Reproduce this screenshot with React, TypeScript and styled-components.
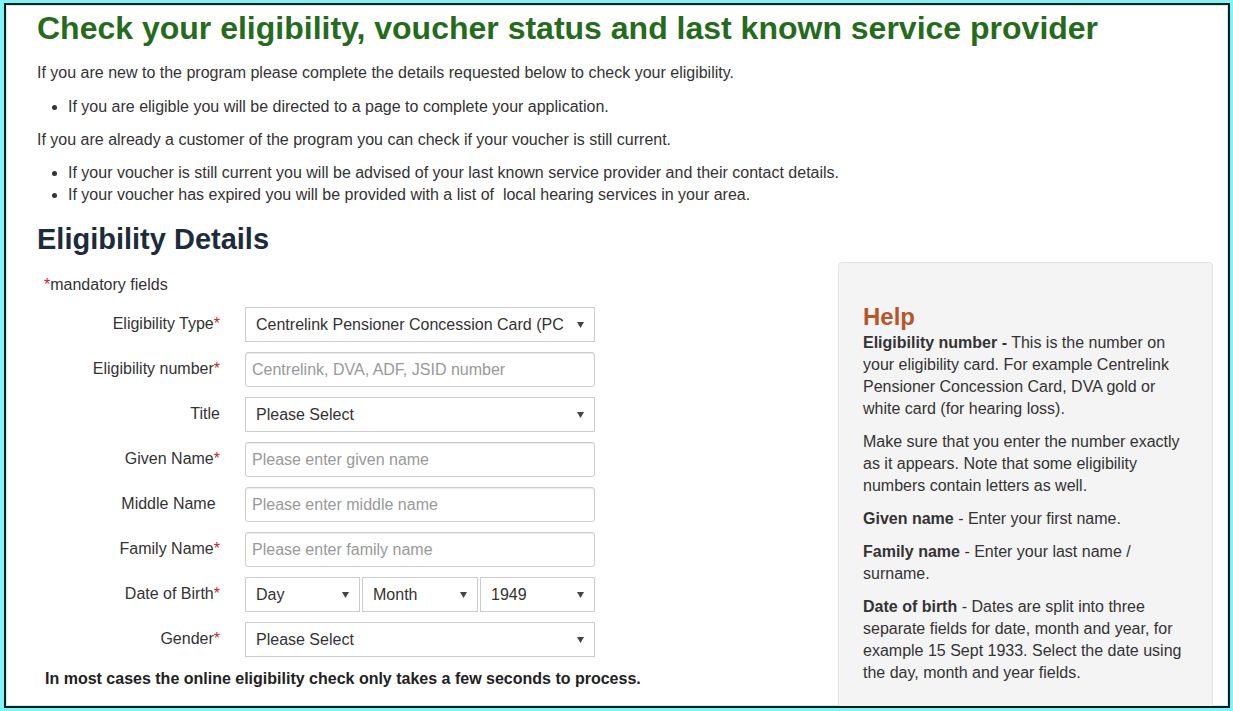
import React from "react"
import styled, { createGlobalStyle } from "styled-components"

const GlobalStyle = createGlobalStyle`
  html, body {
    margin: 0;
    padding: 0;
    background: #80f4f4;
  }
  body {
    font-family: "Liberation Sans", Arial, sans-serif;
    color: #333;
  }
  * { box-sizing: border-box; }
`

const Frame = styled.div`
  margin: 3px 3px 0 4px;
  height: 705px;
  border: 2px solid #0d1b1b;
  background: #fff;
  box-shadow: inset 0 0 0 1px #bff5f5;
  overflow: hidden;
  padding: 0 15px 0 31px;
`

const Title = styled.h1`
  margin: 5px 0 0;
  font-size: 32px;
  line-height: 36px;
  font-weight: bold;
  color: #256b1c;
  white-space: nowrap;
`

const Para = styled.p<{ $top?: number }>`
  margin: ${(p) => p.$top ?? 10}px 0 0;
  font-size: 16px;
  line-height: 22px;
`

const List = styled.ul<{ $top?: number }>`
  margin: ${(p) => p.$top ?? 11}px 0 0;
  padding-left: 31px;
  font-size: 16px;
  line-height: 22px;
`

const SectionTitle = styled.h2`
  margin: 16px 0 0;
  font-size: 29px;
  line-height: 34px;
  font-weight: bold;
  color: #1d2c3c;
`

const Columns = styled.div`
  display: flex;
  justify-content: space-between;
  margin-top: 6px;
`

const FormColumn = styled.div`
  width: 640px;
  padding-top: 13px;
`

const Mandatory = styled.div`
  padding-left: 7px;
  font-size: 16px;
  line-height: 20px;
`

const Star = styled.span`
  color: #c0262b;
`

const Rows = styled.div`
  display: flex;
  flex-direction: column;
  gap: 10px;
  margin-top: 12px;
`

const Row = styled.div`
  display: flex;
  align-items: center;
  gap: 25px;
`

const Label = styled.label`
  width: 183px;
  text-align: right;
  font-size: 16px;
  color: #333;
  padding-bottom: 2px;
  white-space: nowrap;
`

const Field = styled.div`
  width: 350px;
  display: flex;
  gap: 2px;
`

const TextInput = styled.input`
  width: 100%;
  height: 35px;
  padding: 0 6px;
  border: 1px solid #ccc;
  border-radius: 3px;
  box-shadow: inset 0 1px 1px rgba(0, 0, 0, 0.075);
  font-family: "Liberation Sans", Arial, sans-serif;
  font-size: 16px;
  color: #333;
  &::placeholder { color: #999; }
`

const SelectBox = styled.div<{ $width?: number }>`
  flex: ${(p) => (p.$width ? `0 0 ${p.$width}px` : "1")};
  height: 35px;
  display: flex;
  align-items: center;
  justify-content: space-between;
  padding: 0 10px 0 10px;
  border: 1px solid #ccc;
  background: #fff;
  font-size: 16px;
  color: #333;
  white-space: nowrap;
  overflow: hidden;
`

const Note = styled.p`
  margin: 13px 0 0 8px;
  font-size: 16px;
  font-weight: bold;
  color: #222;
  white-space: nowrap;
`

const HelpPanel = styled.aside`
  width: 375px;
  height: 500px;
  background: #f4f4f4;
  border: 1px solid #e3e3e3;
  border-radius: 4px;
  padding: 38px 24px 0 24px;
`

const HelpTitle = styled.h3`
  margin: 0;
  font-size: 24px;
  line-height: 31px;
  font-weight: bold;
  color: #b6562b;
`

const HelpText = styled.p`
  margin: 0 0 11px;
  font-size: 16px;
  line-height: 22px;
  color: #333;
`

const Arrow = () => (
  <svg width="7" height="7" viewBox="0 0 7 7">
    <path d="M0 1 L7 1 L3.5 7 Z" fill="#444" />
  </svg>
)

function Select({ value, width }: { value: string; width?: number }) {
  return (
    <SelectBox $width={width}>
      <span>{value}</span>
      <Arrow />
    </SelectBox>
  )
}

function Required({ children }: { children: React.ReactNode }) {
  return (
    <Label>
      {children}
      <Star>*</Star>
    </Label>
  )
}

export default function App() {
  return (
    <>
      <GlobalStyle />
      <Frame>
        <Title>Check your eligibility, voucher status and last known service provider</Title>
        <Para $top={16}>
          If you are new to the program please complete the details requested below to check your eligibility.
        </Para>
        <List $top={12}>
          <li>If you are eligible you will be directed to a page to complete your application.</li>
        </List>
        <Para $top={11}>If you are already a customer of the program you can check if your voucher is still current.</Para>
        <List>
          <li>If your voucher is still current you will be advised of your last known service provider and their contact details.</li>
          <li>If your voucher has expired you will be provided with a list of &nbsp;local hearing services in your area.</li>
        </List>
        <SectionTitle>Eligibility Details</SectionTitle>

        <Columns>
          <FormColumn>
            <Mandatory>
              <Star>*</Star>mandatory fields
            </Mandatory>
            <Rows>
              <Row>
                <Required>Eligibility Type</Required>
                <Field>
                  <Select value="Centrelink Pensioner Concession Card (PC" />
                </Field>
              </Row>
              <Row>
                <Required>Eligibility number</Required>
                <Field>
                  <TextInput placeholder="Centrelink, DVA, ADF, JSID number" />
                </Field>
              </Row>
              <Row>
                <Label>Title</Label>
                <Field>
                  <Select value="Please Select" />
                </Field>
              </Row>
              <Row>
                <Required>Given Name</Required>
                <Field>
                  <TextInput placeholder="Please enter given name" />
                </Field>
              </Row>
              <Row>
                <Label>Middle Name&nbsp;</Label>
                <Field>
                  <TextInput placeholder="Please enter middle name" />
                </Field>
              </Row>
              <Row>
                <Required>Family Name</Required>
                <Field>
                  <TextInput placeholder="Please enter family name" />
                </Field>
              </Row>
              <Row>
                <Required>Date of Birth</Required>
                <Field>
                  <Select value="Day" width={115} />
                  <Select value="Month" width={116} />
                  <Select value="1949" />
                </Field>
              </Row>
              <Row>
                <Required>Gender</Required>
                <Field>
                  <Select value="Please Select" />
                </Field>
              </Row>
            </Rows>
            <Note>In most cases the online eligibility check only takes a few seconds to process.</Note>
          </FormColumn>

          <HelpPanel>
            <HelpTitle>Help</HelpTitle>
            <HelpText>
              <b>Eligibility number -</b> This is the number on your eligibility card. For example Centrelink
              Pensioner Concession Card, DVA gold or white card (for hearing loss).
            </HelpText>
            <HelpText>
              Make sure that you enter the number exactly as it appears. Note that some eligibility numbers contain
              letters as well.
            </HelpText>
            <HelpText>
              <b>Given name</b> - Enter your first name.
            </HelpText>
            <HelpText>
              <b>Family name</b> - Enter your last name / surname.
            </HelpText>
            <HelpText>
              <b>Date of birth</b> - Dates are split into three separate fields for date, month and year, for example
              15 Sept 1933. Select the date using the day, month and year fields.
            </HelpText>
          </HelpPanel>
        </Columns>
      </Frame>
    </>
  )
}
